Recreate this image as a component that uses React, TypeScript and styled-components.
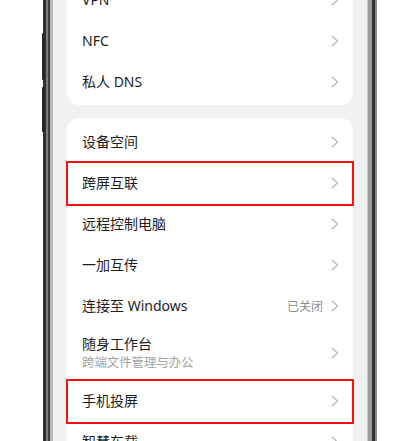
import React from "react";
import styled, { createGlobalStyle } from "styled-components";

type Item = {
  title: string;
  sub?: string;
  value?: string;
  marked?: boolean;
};

const topGroup: Item[] = [{ title: "VPN" }, { title: "NFC" }, { title: "私人 DNS" }];

const connectGroup: Item[] = [
  { title: "设备空间" },
  { title: "跨屏互联", marked: true },
  { title: "远程控制电脑" },
  { title: "一加互传" },
  { title: "连接至 Windows", value: "已关闭" },
  { title: "随身工作台", sub: "跨端文件管理与办公" },
  { title: "手机投屏", marked: true },
  { title: "智慧车载" },
];

const Chevron = () => (
  <ChevronIcon width="8" height="12" viewBox="0 0 8 12" fill="none">
    <path d="M1.2 1 L6.4 6 L1.2 11" stroke="#b9b9bc" strokeWidth="1.3" strokeLinecap="round" strokeLinejoin="round" />
  </ChevronIcon>
);

const App = () => {
  const renderRow = (item: Item) => (
    <Row key={item.title} tall={!!item.sub}>
      <Texts>
        <Title>{item.title}</Title>
        {item.sub && <Sub>{item.sub}</Sub>}
      </Texts>
      <Trail>
        {item.value && <Value>{item.value}</Value>}
        <Chevron />
      </Trail>
      {item.marked && <Mark />}
    </Row>
  );

  return (
    <>
      <GlobalStyle />
      <Page>
        <Phone>
          <VolumeKey top={33} height={47} />
          <VolumeKey top={87} height={45} />
          <Screen>
            <Card shift={-24}>{topGroup.map(renderRow)}</Card>
            <Card>{connectGroup.map(renderRow)}</Card>
          </Screen>
        </Phone>
      </Page>
    </>
  );
};

const GlobalStyle = createGlobalStyle`
  html, body {
    margin: 0;
    padding: 0;
    background: #ffffff;
    overflow: hidden;
  }
  body {
    font-family: "Noto Sans", "Noto Sans CJK SC", sans-serif;
  }
`;

const Page = styled.div`
  width: 398px;
  height: 441px;
  display: flex;
  padding-left: 43px;
  box-sizing: border-box;
`;

const Phone = styled.div`
  position: relative;
  width: 334px;
  height: 441px;
  padding: 0 10px;
  box-sizing: border-box;
  display: flex;
  background: linear-gradient(
    to right,
    #2f2f2f 0 3px,
    #7c7c7c 3px 5px,
    #3d3d3d 5px 7px,
    #b7b7b7 7px 10px,
    #c9c9c9 calc(100% - 10px) calc(100% - 9px),
    #9c9c9c calc(100% - 9px) calc(100% - 5px),
    #2f2f2f calc(100% - 5px) calc(100% - 2px),
    #8c8c8c calc(100% - 2px) 100%
  );
`;

const VolumeKey = styled.div<{ top: number; height: number }>`
  position: absolute;
  left: -1px;
  top: ${(p) => p.top}px;
  width: 3px;
  height: ${(p) => p.height}px;
  background: #262626;
  border-radius: 1px;
`;

const Screen = styled.div`
  flex: 1;
  background: #f0f1f3;
  display: flex;
  flex-direction: column;
  gap: 13px;
  padding: 0 14px;
  overflow: hidden;
`;

const Card = styled.div<{ shift?: number }>`
  margin-top: ${(p) => p.shift ?? 0}px;
  background: #ffffff;
  border-radius: 12px;
  padding: 3px 0;
  display: flex;
  flex-direction: column;
  flex-shrink: 0;
`;

const Row = styled.div<{ tall: boolean }>`
  position: relative;
  height: ${(p) => (p.tall ? 54 : 41)}px;
  display: flex;
  align-items: center;
  justify-content: space-between;
  padding: 0 14px 0 15px;
`;

const Texts = styled.div`
  display: flex;
  flex-direction: column;
  gap: 2px;
`;

const Title = styled.div`
  font-size: 14px;
  line-height: 18px;
  color: #1e1e1e;
`;

const Sub = styled.div`
  font-size: 12.4px;
  line-height: 16px;
  color: #a3a3a6;
`;

const Trail = styled.div`
  display: flex;
  align-items: center;
  gap: 8px;
`;

const Value = styled.span`
  font-size: 12px;
  color: #8d8d90;
`;

const ChevronIcon = styled.svg`
  display: block;
`;

const Mark = styled.div`
  position: absolute;
  left: -1px;
  right: -1px;
  top: -1px;
  bottom: -3px;
  border: 2px solid #f50f0f;
  pointer-events: none;
`;

export default App;
